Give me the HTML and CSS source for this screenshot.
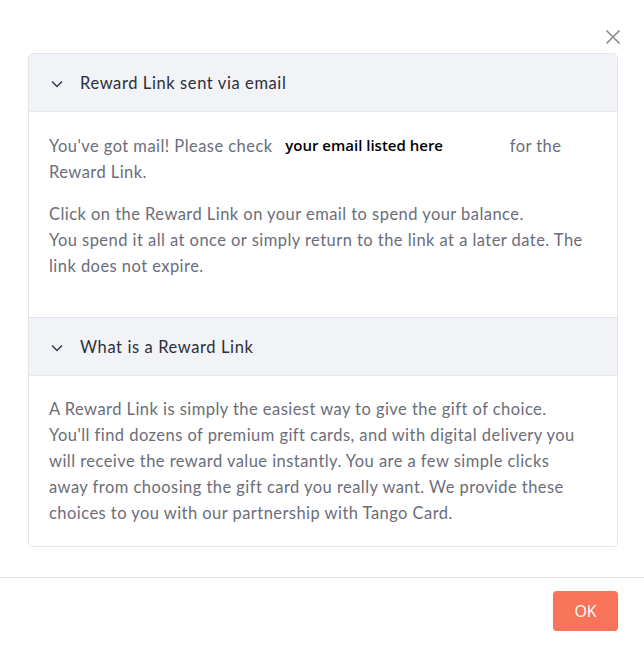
FILE: index.html
```html
<!DOCTYPE html>
<html>
<head>
<meta charset="utf-8">
<link rel="stylesheet" href="styles.css">
</head>
<body>
<div class="modal">
  <div class="topbar">
    <button class="close" aria-label="Close">
      <svg width="16" height="16" viewBox="0 0 16 16"><path d="M1.5 1.5 L14.5 14.5 M14.5 1.5 L1.5 14.5" stroke="#8a8a8a" stroke-width="1.6" fill="none"/></svg>
    </button>
  </div>
  <div class="card">
    <div class="section-head">
      <svg class="chev" width="12" height="8" viewBox="0 0 12 8"><path d="M1 1.5 L6 6.5 L11 1.5" stroke="#333645" stroke-width="1.4" fill="none"/></svg>
      <span>Reward Link sent via email</span>
    </div>
    <div class="section-body first">
      <p>You've got mail! Please check <span class="email">your email listed here</span> for the Reward Link.</p>
      <p>Click on the Reward Link on your email to spend your balance.<br>You spend it all at once or simply return to the link at a later date. The link does not expire.</p>
    </div>
    <div class="section-head">
      <svg class="chev" width="12" height="8" viewBox="0 0 12 8"><path d="M1 1.5 L6 6.5 L11 1.5" stroke="#333645" stroke-width="1.4" fill="none"/></svg>
      <span>What is a Reward Link</span>
    </div>
    <div class="section-body last">
      <p>A Reward Link is simply the easiest way to give the gift of choice. You'll find dozens of premium gift cards, and with digital delivery you will receive the reward value instantly. You are a few simple clicks away from choosing the gift card you really want. We provide these choices to you with our partnership with Tango Card.</p>
    </div>
  </div>
  <div class="footer">
    <button class="ok">OK</button>
  </div>
</div>
</body>
</html>
```

FILE: styles.css
```css
* { box-sizing: border-box; }
html, body { margin: 0; padding: 0; background: #fff; }
body { font-family: Lato, "Noto Sans", sans-serif; }
.modal { width: 644px; }
.topbar { height: 53px; display: flex; justify-content: flex-end; align-items: flex-start; padding: 29px 23px 0 0; }
.close { width: 16px; height: 16px; padding: 0; border: 0; background: none; display: block; }
.close svg { display: block; }
.card { margin: 0 26px 0 28px; border: 1px solid #e3e6ec; border-radius: 5px; overflow: hidden; }
.section-head { height: 58px; background: #f2f3f7; display: flex; align-items: center; padding-left: 22px; font-size: 16.5px; letter-spacing: 0.6px; color: #2c2e3a; border-bottom: 1px solid #e3e6ec; }
.chev { margin-right: 17px; margin-top: 2px; }
.section-body { padding: 21px 20px 22px 20px; font-size: 16.5px; letter-spacing: 0.45px; line-height: 26px; color: #6b6d7a; border-bottom: 1px solid #e3e6ec; }
.section-body.last { border-bottom: 0; padding: 20px 30px 20px 20px; }
.section-body p { margin: 0 0 16px 0; }
.section-body.last p { margin: 0; }
.email { padding: 0 62px 0 8px; font-family: "Open Sans", sans-serif; font-weight: 600; font-size: 15px; letter-spacing: 0; color: #000; position: relative; top: -1px; }
.footer { margin-top: 30px; border-top: 1px solid #e6e6e8; display: flex; justify-content: flex-end; padding: 13px 26px 0 0; }
.ok { width: 65px; height: 40px; border: 0; border-radius: 4px; background: #f7735a; color: #fff; font-family: "Open Sans", sans-serif; font-size: 16px; box-shadow: 0 1px 2px rgba(0,0,0,0.1); }
```
